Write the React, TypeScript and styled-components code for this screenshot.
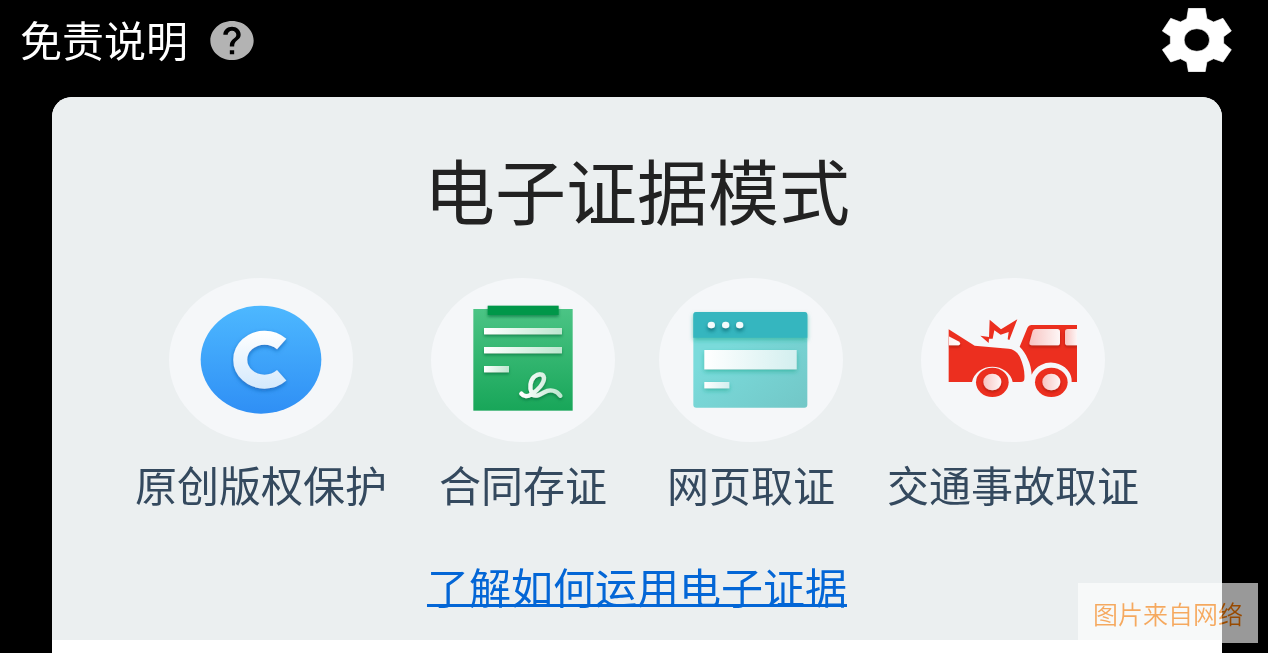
import React from 'react';
import styled, { createGlobalStyle } from 'styled-components';
import { MdHelp } from 'react-icons/md';

const GlobalStyle = createGlobalStyle`
  * { box-sizing: border-box; }
  body {
    margin: 0;
    background: #000;
    font-family: "Noto Sans CJK SC", sans-serif;
  }
`;

const Page = styled.div`
  position: relative;
  min-height: 100vh;
  display: flex;
  flex-direction: column;
  background: #000;
`;

const Header = styled.header`
  display: flex;
  align-items: center;
  justify-content: space-between;
  height: 80px;
  padding: 0 36px 0 20px;
`;

const HeaderGroup = styled.div`
  display: flex;
  align-items: center;
  gap: 18px;
`;

const Disclaimer = styled.span`
  padding-bottom: 2px;
  color: #fff;
  font-size: 42px;
  line-height: 60px;
`;

const IconButton = styled.button`
  display: flex;
  padding: 0;
  border: 0;
  background: none;
  color: #b3b3b3;
  cursor: pointer;
`;

const HelpIcon = styled(MdHelp)`
  width: 52px;
  height: 47px;
`;

const Main = styled.main`
  flex: 1;
  display: flex;
  flex-direction: column;
  margin: 17px 46px 0 52px;
  background: #fff;
  border-radius: 20px 20px 0 0;
`;

const Card = styled.section`
  display: flex;
  flex-direction: column;
  align-items: center;
  padding: 49px 0 24px;
  background: #ebeff0;
  border-radius: 20px 20px 0 0;
`;

const Title = styled.h1`
  margin: 0;
  color: #222;
  font-size: 71px;
  font-weight: 400;
  line-height: 84px;
`;

const Modes = styled.ul`
  display: flex;
  justify-content: center;
  gap: 44px;
  margin: 48px 0 42px;
  padding: 0;
  list-style: none;
`;

const Mode = styled.li`
  display: flex;
  flex-direction: column;
  align-items: center;
  gap: 12px;
`;

const Disc = styled.div`
  width: 184px;
  height: 164px;
  border-radius: 50%;
  background: #f5f7f9;
`;

const ModeLabel = styled.span`
  color: #34495e;
  font-size: 42px;
  line-height: 60px;
  white-space: nowrap;
`;

const LearnLink = styled.a`
  color: #0366d6;
  font-size: 42px;
  line-height: 60px;
  text-decoration: underline;
  text-decoration-thickness: 3px;
  text-underline-offset: 0;
  text-decoration-skip-ink: none;
`;

const Watermark = styled.div`
  position: absolute;
  right: 10px;
  bottom: 10px;
  width: 180px;
  height: 60px;
  display: flex;
  align-items: center;
  justify-content: center;
  background: rgba(255, 255, 255, 0.6);
`;

/* Difference blending keeps the caption orange on both light and dark ground. */
const WatermarkText = styled.span`
  color: #02509a;
  font-size: 25px;
  font-weight: 350;
  mix-blend-mode: difference;
`;

const GearIcon = () => (
  <svg width="70" height="64" viewBox="97 25 209 192" preserveAspectRatio="none" aria-hidden="true">
    <path
      fill="#fff"
      stroke="#fff"
      strokeWidth="2"
      strokeLinejoin="round"
      fillRule="evenodd"
      d="M176 26H226L231 57L251 67L279 56L304 94L281 111V131L304 150L279 187L251 177L231 187L226 216H176L171 187L152 177L123 187L98 150L122 132V110L98 94L123 56L152 67L171 57ZM201 87A38 34 0 1 0 201 155A38 34 0 1 0 201 87Z"
    />
  </svg>
);

const CopyrightIcon = () => (
  <svg width="184" height="164" viewBox="26 24 552 492" aria-hidden="true">
    <defs>
      <linearGradient id="blue" x1="0" y1="0" x2="0" y2="1">
        <stop offset="0" stopColor="#4db8ff" />
        <stop offset="1" stopColor="#2f8ff5" />
      </linearGradient>
      <linearGradient id="letter" gradientUnits="userSpaceOnUse" x1="0" y1="183" x2="0" y2="355">
        <stop offset="0" stopColor="#fff" />
        <stop offset="1" stopColor="#d4e9fc" />
      </linearGradient>
      <filter id="blueShadow" x="-20%" y="-20%" width="140%" height="150%">
        <feDropShadow dx="0" dy="6" stdDeviation="7" floodColor="#0b5cae" floodOpacity="0.7" />
      </filter>
    </defs>
    <ellipse cx="302" cy="269" rx="181" ry="162" fill="url(#blue)" />
    <path d="M364 222A73 66 0 1 0 364 316" fill="none" stroke="url(#letter)" strokeWidth="42" filter="url(#blueShadow)" />
  </svg>
);

const ContractIcon = () => (
  <svg width="184" height="164" viewBox="18 24 552 492" aria-hidden="true">
    <defs>
      <linearGradient id="green" x1="0" y1="0" x2="0" y2="1">
        <stop offset="0" stopColor="#4bc485" />
        <stop offset="1" stopColor="#18a659" />
      </linearGradient>
      <linearGradient id="line" x1="0" y1="0" x2="1" y2="0">
        <stop offset="0" stopColor="#fff" />
        <stop offset="1" stopColor="#bde6cf" />
      </linearGradient>
      <filter id="greenShadow" x="-20%" y="-40%" width="140%" height="240%">
        <feDropShadow dx="0" dy="6" stdDeviation="5" floodColor="#046b37" floodOpacity="0.6" />
      </filter>
    </defs>
    <rect x="145" y="117" width="298" height="305" fill="url(#green)" />
    <g filter="url(#greenShadow)">
      <rect x="188" y="107" width="213" height="28" fill="#059748" />
    </g>
    <g fill="url(#line)" filter="url(#greenShadow)">
      <rect x="177" y="174" width="234" height="19" />
      <rect x="177" y="231" width="234" height="19" />
      <rect x="177" y="288" width="75" height="19" />
    </g>
    <path
      d="M289 371C296 380 308 381 319 373C339 360 358 340 357 323C355 309 339 311 328 320C315 332 313 353 320 369C327 383 342 376 357 367C377 355 396 363 406 377"
      fill="none"
      stroke="url(#line)"
      strokeWidth="13"
      strokeLinecap="round"
      strokeLinejoin="round"
      filter="url(#greenShadow)"
    />
  </svg>
);

const WebPageIcon = () => (
  <svg width="184" height="164" viewBox="26 24 552 492" aria-hidden="true">
    <defs>
      <linearGradient id="teal" x1="0" y1="0" x2="1" y2="1">
        <stop offset="0.3" stopColor="#7adbdb" />
        <stop offset="1" stopColor="#72c7c7" />
      </linearGradient>
      <linearGradient id="field" x1="0" y1="0" x2="1" y2="0">
        <stop offset="0" stopColor="#fff" />
        <stop offset="1" stopColor="#d3efef" />
      </linearGradient>
      <filter id="tealShadow" x="-20%" y="-40%" width="140%" height="220%">
        <feDropShadow dx="0" dy="7" stdDeviation="7" floodColor="#20ab91" floodOpacity="0.6" />
      </filter>
      <filter id="dotShadow" x="-40%" y="-60%" width="180%" height="300%">
        <feDropShadow dx="0" dy="8" stdDeviation="6" floodColor="#055b66" floodOpacity="0.8" />
      </filter>
    </defs>
    <rect x="129" y="126" width="342" height="287" rx="9" fill="url(#teal)" />
    <path d="M129 203V135Q129 126 138 126H462Q471 126 471 135V203Z" fill="#36b6bf" filter="url(#tealShadow)" />
    <g fill="#f2fbfc" filter="url(#dotShadow)">
      <ellipse cx="183" cy="165" rx="11" ry="10" />
      <ellipse cx="226" cy="165" rx="11" ry="10" />
      <ellipse cx="268" cy="165" rx="11" ry="10" />
    </g>
    <g fill="url(#field)" filter="url(#tealShadow)">
      <rect x="162" y="240" width="277" height="58" />
      <rect x="162" y="336" width="75" height="19" />
    </g>
  </svg>
);

const AccidentIcon = () => (
  <svg width="184" height="164" viewBox="27 24 552 492" aria-hidden="true">
    <defs>
      <linearGradient id="glass" x1="0" y1="0" x2="1" y2="0">
        <stop offset="0" stopColor="#f8c4c1" />
        <stop offset="1" stopColor="#fdf6f6" />
      </linearGradient>
      <linearGradient id="rearGlass" x1="0" y1="0" x2="1" y2="0">
        <stop offset="0" stopColor="#fdf0ef" />
        <stop offset="1" stopColor="#fff" />
      </linearGradient>
      <filter id="redShadow" x="-30%" y="-30%" width="160%" height="180%">
        <feDropShadow dx="0" dy="5" stdDeviation="5" floodColor="#8f0d04" floodOpacity="0.6" />
      </filter>
      <clipPath id="cars">
        <rect x="110" y="140" width="385" height="250" />
      </clipPath>
    </defs>
    <g fill="#ec2f1f">
      <path d="M110 178L188 227L290 236C306 238 316 246 324 262C334 284 339 306 337 328Q336 336 327 336H302A62 56 0 0 0 180 336H110Z" />
      <path d="M359 165H495V336H479A62 56 0 0 0 359 314C358 282 342 249 323 230L346 174Q350 165 359 165Z" />
      <path d="M205 197L231 201L233 149L267 178L316 148L292 210L287 208L290 186L266 194L247 181L242 206L231 206L230 219Z" />
      <ellipse cx="241" cy="337" rx="49" ry="44" />
      <ellipse cx="418" cy="337" rx="49" ry="44" />
    </g>
    <g clipPath="url(#cars)">
      <g fill="url(#glass)" filter="url(#redShadow)">
        <path d="M110 199L139 214Q150 222 140 226H110Z" fill="url(#rearGlass)" />
        <path d="M371 177H436Q444 177 444 185V218Q444 226 436 226H360Q350 226 353 216L361 186Q363 177 371 177Z" />
        <path d="M495 177H467Q459 177 459 185V218Q459 226 467 226H495Z" />
        <ellipse cx="241" cy="336" rx="27" ry="25" />
        <ellipse cx="418" cy="336" rx="27" ry="25" />
      </g>
    </g>
  </svg>
);

const modes = [
  { label: '原创版权保护', Icon: CopyrightIcon },
  { label: '合同存证', Icon: ContractIcon },
  { label: '网页取证', Icon: WebPageIcon },
  { label: '交通事故取证', Icon: AccidentIcon },
];

export default function App() {
  return (
    <>
      <GlobalStyle />
      <Page>
        <Header>
          <HeaderGroup>
            <Disclaimer>免责说明</Disclaimer>
            <IconButton type="button" aria-label="帮助">
              <HelpIcon preserveAspectRatio="none" />
            </IconButton>
          </HeaderGroup>
          <IconButton type="button" aria-label="设置">
            <GearIcon />
          </IconButton>
        </Header>
        <Main>
          <Card>
            <Title>电子证据模式</Title>
            <Modes>
              {modes.map(({ label, Icon }) => (
                <Mode key={label}>
                  <Disc>
                    <Icon />
                  </Disc>
                  <ModeLabel>{label}</ModeLabel>
                </Mode>
              ))}
            </Modes>
            <LearnLink href="#guide">了解如何运用电子证据</LearnLink>
          </Card>
        </Main>
        <Watermark>
          <WatermarkText>图片来自网络</WatermarkText>
        </Watermark>
      </Page>
    </>
  );
}
